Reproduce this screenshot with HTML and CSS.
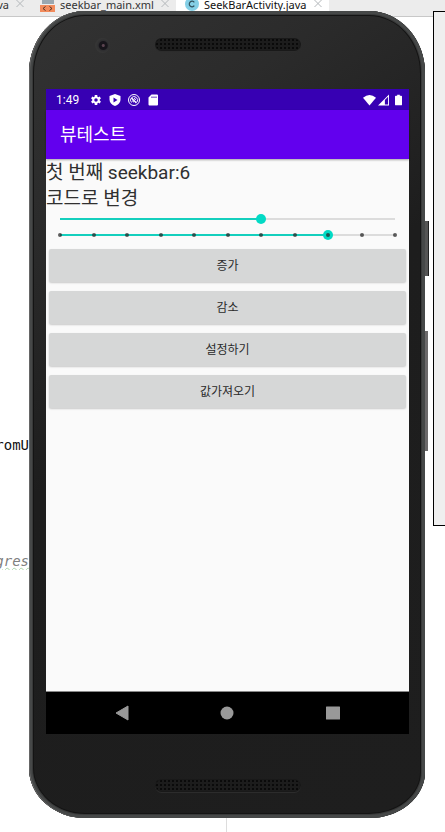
FILE: index.html
```html
<!DOCTYPE html>
<html lang="ko">
<head>
<meta charset="utf-8">
<meta name="viewport" content="width=device-width, initial-scale=1">
<title>뷰테스트</title>
<link rel="stylesheet" href="styles.css">
</head>
<body>
<div class="desktop">
  <section class="editor">
    <nav class="tabs">
      <div class="tab tab-first">va
        <svg class="close" viewBox="0 0 10 10"><path d="M1.5 0l7 7M8.5 0l-7 7"/></svg>
      </div>
      <div class="tab">
        <svg class="file-icon" viewBox="0 0 16 13"><path fill="#9aa7b0" d="M2 0h12v4H2z"/><path fill="#f28b5c" d="M0 5h15v7H0z"/><path d="M5.500 6.500L3 8.500l2.500 2M9.500 6.500l2.500 2-2.500 2" fill="none" stroke="#4b3328"/></svg>
        seekbar_main.xml
        <svg class="close" viewBox="0 0 10 10"><path d="M1.500 0l7 7M8.500 0l-7 7"/></svg>
      </div>
      <div class="tab tab-active">
        <svg class="file-icon" viewBox="0 0 16 13"><circle cx="8" cy="4" r="7" fill="#84cfe6"/><path d="M10.300 2.300A2.800 2.800 0 1 0 10.300 5.700" fill="none" stroke="#31525e" stroke-width="1.200"/></svg>
        SeekBarActivity.java
        <svg class="close" viewBox="0 0 10 10"><path d="M1.500 0l7 7M8.500 0l-7 7"/></svg>
      </div>
    </nav>
    <div class="code">
      <code class="line">romU</code>
      <code class="line line-hint">gres</code>
    </div>
  </section>

  <aside class="tool-panel"></aside>

  <main class="phone">
    <span class="side-key power"></span>
    <span class="side-key volume"></span>
    <div class="bezel bezel-top">
      <span class="camera"></span>
      <span class="speaker"></span>
    </div>

    <div class="screen">
      <div class="status-bar">
        <span class="clock">1:49</span>
        <svg class="status-icon" viewBox="0 0 24 24"><path fill-rule="evenodd" d="M19.400 13a7.500 7.500 0 0 0 0-2l2.400-1.800-2.300-4-2.800 1.200a7.500 7.500 0 0 0-1.800-1L14.500 2h-5l-.4 3.400a7.500 7.500 0 0 0-1.800 1L4.500 5.200l-2.300 4L4.600 11a7.500 7.500 0 0 0 0 2l-2.400 1.800 2.300 4 2.800-1.200a7.500 7.500 0 0 0 1.800 1l.4 3.400h5l.4-3.400a7.500 7.500 0 0 0 1.800-1l2.800 1.200 2.300-4zM12 8.500a3.500 3.500 0 1 1 0 7 3.500 3.500 0 0 1 0-7z"/></svg>
        <svg class="status-icon" viewBox="0 0 24 24"><path fill-rule="evenodd" d="M12 0L1 4v7c0 6 4.500 11 11 13 6.500-2 11-7 11-13V4zM9 7l8 5-8 5z"/></svg>
        <svg class="status-icon" viewBox="0 0 24 24"><g fill="none" stroke="#fff" stroke-width="2"><circle cx="12" cy="12" r="11"/><path d="M7 17a7 7 0 1 1 11-1"/><path d="M7 8l10 10" stroke-width="3"/><path d="M9 13a3 3 0 0 0 3 3M12 9a3 3 0 0 1 3 3"/></g></svg>
        <svg class="status-icon" viewBox="0 0 24 24"><path fill-rule="evenodd" d="M9 1h11a2 2 0 0 1 2 2v18a2 2 0 0 1-2 2H5a2 2 0 0 1-2-2V7zM9 5v3h2V5zM13 5v3h2V5zM17 5v3h2V5z"/></svg>
        <span class="status-right">
          <svg class="wifi" viewBox="0 0 14 12"><path d="M0 3.500Q7-2.500 14 3.500L7 12z"/></svg>
          <svg class="signal" viewBox="0 0 12 12"><path fill-rule="evenodd" d="M12 0v12H0zM11 2.500L7.500 6v5H11z"/></svg>
          <svg class="battery" viewBox="0 0 8 12"><path d="M2.500 0h3v1H7q1 0 1 1v9q0 1-1 1H1q-1 0-1-1V2q0-1 1-1h1.500z"/></svg>
        </span>
      </div>
      <header class="app-bar"><h1>뷰테스트</h1></header>

      <div class="content">
        <label class="caption" for="seek1">첫 번째 seekbar:6</label>
        <label class="caption" for="seek2">코드로 변경</label>
        <div class="seek"><input id="seek1" class="range range-six" type="range" min="0" max="10" value="6"></div>
        <div class="seek">
          <input id="seek2" class="range range-eight" type="range" min="0" max="10" value="8">
          <span class="ticks"><i></i><i></i><i></i><i></i><i></i><i></i><i></i><i></i><i></i><i></i><i></i></span>
        </div>
        <div class="actions">
          <button type="button">증가</button>
          <button type="button">감소</button>
          <button type="button">설정하기</button>
          <button type="button">값가져오기</button>
        </div>
      </div>

      <nav class="nav-bar">
        <button type="button" aria-label="뒤로"><svg viewBox="0 0 14 16"><path d="M13 1v14L1 8z" stroke="#999" stroke-linejoin="round"/></svg></button>
        <button type="button" aria-label="홈"><svg viewBox="0 0 14 16"><circle cx="7" cy="8" r="6.500"/></svg></button>
        <button type="button" aria-label="최근 앱"><svg viewBox="0 0 14 16"><rect y="1.500" width="14" height="13" rx=".5"/></svg></button>
      </nav>
    </div>

    <div class="bezel bezel-bottom"><span class="speaker"></span></div>
  </main>
</div>
</body>
</html>
```
FILE: styles.css
```css
* { box-sizing: border-box; }

body {
  margin: 0;
  background: #fff;
  font-family: Roboto, "Noto Sans CJK KR", sans-serif;
}

svg { display: block; flex: none; }

/* The editor, side panel and phone share one grid cell and overlap. */
.desktop {
  display: grid;
  min-height: 100vh;
  overflow: hidden;
}
.desktop > * { grid-area: 1 / 1; }

.editor {
  display: flex;
  flex-direction: column;
  min-width: 0;
}
.tabs {
  display: flex;
  height: 17px;
  background: #ececec;
  border-bottom: 1px solid #c8c8c8;
  font: 11px/10px "Noto Sans", sans-serif;
  color: #333;
}
.tab {
  display: flex;
  align-items: flex-start;
  gap: 4px;
  padding: 0 6px 0 8px;
  white-space: nowrap;
}
.tab-first { width: 32px; padding: 0 7px 0 0; justify-content: flex-end; gap: 6px; }
.tab-active { background: #fff; color: #111; }
.file-icon { width: 16px; height: 13px; }
.close { width: 10px; height: 10px; margin-left: 2px; fill: none; stroke: #b4b8bb; }
.tab-first .close { margin-left: 0; }

.code {
  flex: 1;
  width: 51%;
  padding-top: 419px;
  border-right: 1px solid #ddd;
}
.line {
  display: flex;
  justify-content: flex-end;
  width: 29px;
  overflow: hidden;
  margin-bottom: 98px;
  font: 14px/18px "DejaVu Sans Mono", monospace;
  color: #111;
}
.line-hint {
  font: italic 14px/18px "DejaVu Sans Mono", monospace;
  color: #808080;
  text-decoration: underline wavy #a9d3a9 1px;
}

.tool-panel {
  justify-self: end;
  width: 12px;
  height: 515px;
  margin-top: 11px;
  background: #efefef;
  border: 1px solid #000;
  border-right: 0;
}

.phone {
  position: relative;
  display: flex;
  flex-direction: column;
  margin: 11px 20px 14px 29px;
  padding: 0 16px 0 17px;
  border-radius: 56px 56px 56px 56px / 62px 62px 46px 50px;
  background: linear-gradient(145deg, #333 0%, #2b2b2b 20%, #1d1d1d 45%, #1e1e1e 100%);
  box-shadow:
    inset 1px 0 #666,
    inset 0 0 0 3px #464848,
    inset 0 0 0 4px #383939,
    inset 0 0 0 5px #141414;
}
.side-key { position: absolute; left: 100%; background: #555; }
.power { top: 210px; width: 4px; height: 55px; border-right: 1px solid #222; }
.volume { top: 320px; width: 3px; height: 120px; background: #6c6a6b; }

.bezel {
  display: grid;
  grid-template-columns: 1fr 146px 1fr;
  align-items: start;
}
.bezel-top { height: 78px; padding-top: 27px; }
.bezel-bottom { height: 84px; padding-top: 45px; }
.camera {
  width: 15px;
  height: 15px;
  margin-left: 49px;
  border-radius: 50%;
  background: radial-gradient(circle at 55% 50%, #5c4450 0 1px, #17151b 2px 4px, #2e2e30 5px, #353535 7px);
}
.speaker {
  grid-column: 2;
  height: 13px;
  border-radius: 7px;
  background: radial-gradient(circle, #0a0a0a 1px, transparent 1px) 0 0 / 4px 4px #1c1c1c;
  box-shadow: inset 0 0 0 1px #191919, 0 1px #2c2c2c;
}

.screen {
  flex: 1;
  display: flex;
  flex-direction: column;
  background: #fafafa;
}
.status-bar {
  display: flex;
  align-items: center;
  gap: 7px;
  height: 21px;
  padding: 0 7px 0 10px;
  background: #3700b3;
  color: #fff;
  font-size: 12px;
  line-height: 20px;
}
.status-bar svg { fill: #fff; height: 12px; }
.clock { margin-right: 4px; }
.status-icon { width: 12px; }
.status-right { display: flex; gap: 2px; margin-left: auto; }
.wifi { width: 13px; }
.signal { width: 11px; }
.battery { width: 7px; margin-left: 4px; }

.app-bar {
  display: flex;
  align-items: center;
  height: 49px;
  padding: 0 14px;
  background: #6200ee;
  color: #fff;
  box-shadow: 0 1px 2px rgba(0, 0, 0, .35);
}
.app-bar h1 { margin: 0; font-size: 18px; font-weight: 400; line-height: 24px; }

.content { flex: 1; }
.caption {
  display: block;
  padding-top: 1px;
  font-size: 19px;
  line-height: 25px;
  color: #303030;
}
.seek {
  position: relative;
  display: flex;
  height: 16px;
  margin: 0 9px;
}
.range {
  appearance: none;
  width: 100%;
  height: 16px;
  margin: 0;
  background: no-repeat 5px 7px / calc(100% - 10px) 2px;
}
.range-six { background-image: linear-gradient(90deg, #14cfbd 60%, #dcdcdc 60%); }
.range-eight { background-image: linear-gradient(90deg, #14cfbd 80%, #dcdcdc 80%); }
.range::-webkit-slider-thumb {
  appearance: none;
  width: 10px;
  height: 10px;
  border-radius: 50%;
  background: #03dac5;
}
.ticks {
  position: absolute;
  inset: 6px 3px auto;
  display: flex;
  justify-content: space-between;
  pointer-events: none;
}
.ticks i {
  width: 4px;
  height: 4px;
  border-radius: 50%;
  background: rgba(40, 40, 40, .75);
}

.actions {
  display: flex;
  flex-direction: column;
  gap: 9px;
  padding: 6px 3px;
}
.actions button {
  height: 33px;
  padding: 0;
  border: 0;
  border-radius: 2px;
  background: #d6d7d7;
  box-shadow: 0 1px 2px rgba(0, 0, 0, .2);
  color: #2a2a2a;
  font: 12px/18px Roboto, "Noto Sans CJK KR", sans-serif;
}

.nav-bar {
  display: grid;
  grid-template-columns: repeat(3, 29%);
  justify-content: center;
  height: 43px;
  border-top: 1px solid #888;
  background: #000;
}
.nav-bar button {
  display: grid;
  place-items: center;
  padding: 0;
  border: 0;
  background: none;
}
.nav-bar svg { width: 14px; height: 16px; fill: #999; }
```
